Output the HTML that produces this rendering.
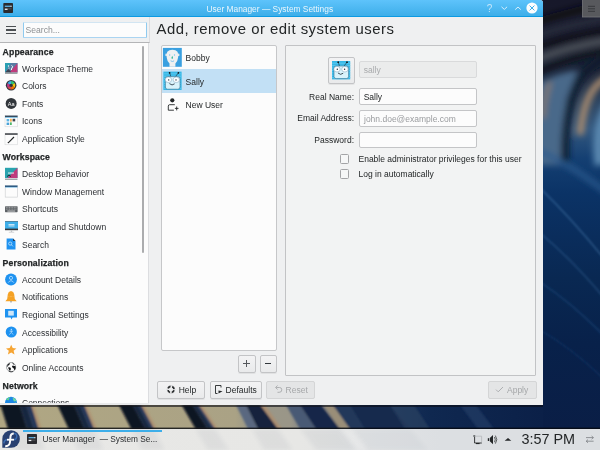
<!DOCTYPE html>
<html><head><meta charset="utf-8">
<style>
*{margin:0;padding:0;box-sizing:border-box}
html,body{width:600px;height:450px;overflow:hidden}
body{-webkit-font-smoothing:antialiased;position:relative;font-family:"Liberation Sans",sans-serif;font-size:8.5px;color:#232627;background:#0b1d3c}
.a{position:absolute}
.t{position:absolute;white-space:nowrap;line-height:12px}
#desk{left:0;top:0;width:600px;height:429px;overflow:hidden;background:#061c44}
#win{will-change:transform;left:0;top:0;width:543px;height:405px;background:#eff0f1;overflow:hidden;border-radius:0 3px 0 0}
#titlebar{left:0;top:0;width:543px;height:17px;background:linear-gradient(180deg,#5ec3fb 0,#3daee9 100%);border-bottom:1px solid #0c9ae2}
#sidehdr{left:0;top:17px;width:150px;height:26px;border-bottom:1px solid #b4b5b7;border-right:1px solid #dcdde0}
#side{left:0;top:43px;width:149px;height:362px;background:#fcfcfc;border-right:1px solid #dcdde0}
.sh{position:absolute;left:2.5px;margin-top:1.5px;-webkit-text-stroke:0.25px #232627;letter-spacing:0.15px;font-weight:bold;white-space:nowrap;line-height:17.6px;height:17.6px;font-size:8.7px;color:#232627}
.si{position:absolute;left:22px;margin-top:0.8px;white-space:nowrap;line-height:17.6px;height:17.6px;color:#2c2f33}
.ic{position:absolute;left:5px;width:12px;height:12px}
.field{position:absolute;background:#fcfcfc;border:1px solid #c4c5c7;border-radius:2px}
.btn{position:absolute;border:1px solid #c3c4c6;border-radius:2px;background:linear-gradient(#f3f3f4,#e9eaeb);box-shadow:0 1px 0 rgba(0,0,0,.06)}
.chk{position:absolute;width:9.6px;height:9.6px;border:1px solid #a3a4a6;border-radius:1.5px;background:#f6f7f7}
</style></head><body>
<div id="desk" class="a"><svg class="a" style="left:0;top:0" width="600" height="429" viewBox="0 0 600 429">
 <defs>
  <linearGradient id="rg" x1="0" y1="0" x2="0" y2="1">
   <stop offset="0" stop-color="#17182a"/>
   <stop offset="0.10" stop-color="#171a2c"/>
   <stop offset="0.16" stop-color="#1a2236"/>
   <stop offset="0.24" stop-color="#2e4662"/>
   <stop offset="0.30" stop-color="#33587f"/>
   <stop offset="0.37" stop-color="#143f72"/>
   <stop offset="0.45" stop-color="#0b3366"/>
   <stop offset="0.55" stop-color="#0a2d5c"/>
   <stop offset="0.65" stop-color="#092852"/>
   <stop offset="0.80" stop-color="#08214a"/>
   <stop offset="1" stop-color="#0a1e46"/>
  </linearGradient>
  <filter id="bl3" filterUnits="userSpaceOnUse" x="500" y="-50" width="150" height="350"><feGaussianBlur stdDeviation="3"/></filter>
  <filter id="bl2" filterUnits="userSpaceOnUse" x="500" y="100" width="150" height="350"><feGaussianBlur stdDeviation="0.8"/></filter>
  <filter id="bl1" filterUnits="userSpaceOnUse" x="-20" y="390" width="660" height="60"><feGaussianBlur stdDeviation="1.3"/></filter>
 </defs>
 <rect x="540" y="0" width="60" height="429" fill="url(#rg)"/>
 <g filter="url(#bl3)">
  <path d="M535 22 Q570 12 610 2" stroke="#0a0b16" stroke-width="7" fill="none"/>
  <path d="M535 36 Q570 24 610 18" stroke="#262a3a" stroke-width="8" fill="none"/>
  <path d="M535 48 Q570 36 610 30" stroke="#080a14" stroke-width="6" fill="none"/>
  <path d="M535 60 Q570 46 610 40" stroke="#4e525a" stroke-width="7" fill="none"/>
  <path d="M535 74 Q565 58 610 50" stroke="#0d121e" stroke-width="6" fill="none"/>
  <path d="M538 84 Q560 72 578 70 L566 100 L562 165 L538 165 Z" fill="#48698a"/>
  <path d="M543 118 Q544 98 550 82" stroke="#8a7a6a" stroke-width="4" fill="none"/>
  <path d="M565 165 Q564 110 578 82 Q590 64 612 56" stroke="#0f1a2e" stroke-width="8" fill="none"/>
  <path d="M580 135 Q583 104 593 90 Q600 80 612 76" stroke="#a88a6e" stroke-width="7" fill="none"/>
  <path d="M600 165 Q595 122 614 98" stroke="#5a88b0" stroke-width="11" fill="none"/>
  <path d="M535 150 Q565 160 610 195" stroke="#2a5a8e" stroke-width="5" fill="none"/>
 </g>
 <g filter="url(#bl2)">
  <path d="M540 188 Q575 222 610 266" stroke="#4a7cae" stroke-width="1.2" fill="none" opacity="0.6"/>
  <path d="M540 233 Q575 262 610 305" stroke="#3f70a4" stroke-width="1.2" fill="none" opacity="0.5"/>
  <path d="M540 282 Q575 305 610 342" stroke="#2a5a90" stroke-width="1.4" fill="none" opacity="0.5"/>
  <path d="M540 330 Q575 350 610 385" stroke="#1e4c84" stroke-width="1.4" fill="none" opacity="0.4"/>
 </g>
 <!-- bottom strip -->
 <defs>
  <linearGradient id="bg2" x1="0" y1="0" x2="543" y2="0" gradientUnits="userSpaceOnUse">
   <stop offset="0" stop-color="#b3a983"/>
   <stop offset="235" stop-color="#aea583" gradientTransform=""/>
  </linearGradient>
  <linearGradient id="bgs" x1="0" y1="0" x2="1" y2="0">
   <stop offset="0" stop-color="#b0a783"/>
   <stop offset="0.433" stop-color="#aaa285"/>
   <stop offset="0.46" stop-color="#9a9888"/>
   <stop offset="0.534" stop-color="#9a9688"/>
   <stop offset="0.589" stop-color="#6a7484"/>
   <stop offset="0.645" stop-color="#4f6078"/>
   <stop offset="0.68" stop-color="#1f3a62"/>
   <stop offset="0.792" stop-color="#0f2850"/>
   <stop offset="1" stop-color="#0b2048"/>
  </linearGradient>
  <linearGradient id="dk" x1="0" y1="0" x2="1" y2="0">
   <stop offset="0" stop-color="#141a2a"/>
   <stop offset="0.15" stop-color="#0b1020"/>
   <stop offset="0.55" stop-color="#0c1324"/>
   <stop offset="0.85" stop-color="#1a2b4a"/>
   <stop offset="1" stop-color="#223556"/>
  </linearGradient>
  <linearGradient id="dk2" x1="0" y1="0" x2="1" y2="0">
   <stop offset="0" stop-color="#6f7a8a"/>
   <stop offset="0.35" stop-color="#24375a"/>
   <stop offset="0.7" stop-color="#0e1c38"/>
   <stop offset="1" stop-color="#1a2c4c"/>
  </linearGradient>
 </defs>
 <rect x="0" y="405" width="543" height="24" fill="url(#bgs)"/>
 <g filter="url(#bl1)">
  <path d="M0.5 405 L19.4 405 L27.0 429 L8.0 429 Z" fill="#0c1222"/>
  <path d="M19.4 405 L26.4 405 L34.0 429 L27.0 429 Z" fill="#17263f"/>
  <path d="M26.4 405 L31.0 405 L38.6 429 L34.0 429 Z" fill="#22355a"/>
  <path d="M31.0 405 L34.2 405 L41.8 429 L38.6 429 Z" fill="#b08666" opacity="0.55"/>
  <path d="M57.5 405 L73.9 405 L84.4 429 L68.7 429 Z" fill="#0c1222"/>
  <path d="M73.9 405 L80.0 405 L90.2 429 L84.4 429 Z" fill="#17263f"/>
  <path d="M80.0 405 L84.0 405 L94.0 429 L90.2 429 Z" fill="#22355a"/>
  <path d="M84.0 405 L87.2 405 L97.2 429 L94.0 429 Z" fill="#b08666" opacity="0.55"/>
  <path d="M119.0 405 L132.6 405 L145.4 429 L131.3 429 Z" fill="#0c1222"/>
  <path d="M132.6 405 L137.7 405 L150.6 429 L145.4 429 Z" fill="#17263f"/>
  <path d="M137.7 405 L141.0 405 L154.0 429 L150.6 429 Z" fill="#22355a"/>
  <path d="M141.0 405 L144.2 405 L157.2 429 L154.0 429 Z" fill="#b08666" opacity="0.55"/>
  <path d="M181.7 405 L192.3 405 L207.6 429 L195.6 429 Z" fill="#0c1222"/>
  <path d="M192.3 405 L196.2 405 L212.1 429 L207.6 429 Z" fill="#17263f"/>
  <path d="M196.2 405 L198.8 405 L215.0 429 L212.1 429 Z" fill="#22355a"/>
  <path d="M198.8 405 L202.0 405 L218.2 429 L215.0 429 Z" fill="#b08666" opacity="0.55"/>
  <path d="M236 405 L246 405 L258 429 L248 429 Z" fill="#5a6880"/>
  <path d="M246 405 L260.4 405 L278 429 L258 429 Z" fill="#15223e"/>
  <path d="M260.4 405 L265 405 L282 429 L278 429 Z" fill="#b08a6a" opacity="0.7"/>
  <path d="M286 405 L300 405 L316 429 L300 429 Z" fill="#4a5a74"/>
  <path d="M300 405 L321 405 L340 429 L316 429 Z" fill="#13264a"/>
  <path d="M323 405 L333 405 L350 429 L340 429 Z" fill="#9a8e78"/>
  <path d="M333 405 L390 405 L410 429 L350 429 Z" fill="#22385a"/>
  <path d="M350 405 L390 405 L405 429 L365 429 Z" fill="#0f2448" opacity="0.7"/>
  <path d="M390 405 L414 405 L430 429 L410 429 Z" fill="#2f4462" opacity="0.6"/>
  <path d="M460 405 L476 405 L494 429 L478 429 Z" fill="#24406a" opacity="0.6"/>
 </g>
 <rect x="0" y="405" width="543" height="2" fill="#0a0c14" opacity="0.6"/>
 <rect x="0" y="427.6" width="600" height="1.4" fill="#05070c" opacity="0.8"/>
 <!-- desktop toolbox -->
 <rect x="582.5" y="-1" width="18" height="18" fill="#58595d" stroke="#76777a" stroke-width="0.8"/>
 <path d="M588 6.3 H595 M588 8.8 H595 M588 11.3 H595" stroke="#333438" stroke-width="0.9"/>
</svg>
</div>

<div id="win" class="a">
  <div id="titlebar" class="a"></div>
  <div class="t" style="left:206.5px;top:2.5px;font-size:8.4px;color:#eaf6fd">User Manager — System Settings</div>

  <div id="sidehdr" class="a"></div>
  <!-- titlebar icon -->
  <svg class="a" style="left:0;top:0" width="543" height="17" viewBox="0 0 543 17">
   <rect x="3.3" y="3" width="9.7" height="10" rx="0.8" fill="#2a2b2f"/>
   <rect x="4.8" y="5.6" width="5.6" height="1.4" fill="#5aa7d6"/>
   <rect x="10.4" y="5.6" width="1.2" height="1.4" fill="#dfe6ea"/>
   <rect x="4.8" y="8.6" width="2.8" height="1.3" fill="#f4f6f8"/>
   <rect x="7.6" y="8.6" width="4" height="0.6" fill="#6d7276"/>
   <!-- help ? -->
   <text x="489.5" y="12" font-family="Liberation Sans" font-size="10" fill="#c4e6fb" text-anchor="middle">?</text>
   <path d="M501.5 6.8 L504.3 9.4 L507.1 6.8" stroke="#d6effd" stroke-width="1" fill="none"/>
   <path d="M515.2 9.6 L518 7 L520.8 9.6" stroke="#d6effd" stroke-width="1" fill="none"/>
   <circle cx="532" cy="8" r="5.6" fill="#fcfdfe"/>
   <path d="M529.6 5.6 L534.4 10.4 M534.4 5.6 L529.6 10.4" stroke="#3daee9" stroke-width="1"/>
  </svg>
  <!-- hamburger -->
  <div class="a" style="left:6px;top:26px;width:10px;height:1.3px;background:#4a4e52"></div>
  <div class="a" style="left:6px;top:29.3px;width:10px;height:1.3px;background:#4a4e52"></div>
  <div class="a" style="left:6px;top:32.6px;width:10px;height:1.3px;background:#4a4e52"></div>
  <!-- search -->
  <div class="a" style="left:23px;top:21.8px;width:123.5px;height:16px;background:#fcfcfc;border:1px solid #8fcaef;border-top-color:#d2e5f2;border-bottom-color:#aad4f1;border-radius:1px"></div>
  <div class="t" style="left:25.5px;top:24px;font-size:8.6px;color:#8e9194">Search...</div>
  <div id="side" class="a"></div>
  <div class="sh" style="top:42.2px">Appearance</div>
  <div class="si" style="top:59.8px">Workspace Theme</div>
  <div class="si" style="top:77.4px">Colors</div>
  <div class="si" style="top:95.0px">Fonts</div>
  <div class="si" style="top:112.6px">Icons</div>
  <div class="si" style="top:130.2px">Application Style</div>
  <div class="sh" style="top:147.8px">Workspace</div>
  <div class="si" style="top:165.4px">Desktop Behavior</div>
  <div class="si" style="top:183.0px">Window Management</div>
  <div class="si" style="top:200.6px">Shortcuts</div>
  <div class="si" style="top:218.2px">Startup and Shutdown</div>
  <div class="si" style="top:235.8px">Search</div>
  <div class="sh" style="top:253.4px">Personalization</div>
  <div class="si" style="top:271.0px">Account Details</div>
  <div class="si" style="top:288.6px">Notifications</div>
  <div class="si" style="top:306.2px">Regional Settings</div>
  <div class="si" style="top:323.8px">Accessibility</div>
  <div class="si" style="top:341.4px">Applications</div>
  <div class="si" style="top:359.0px">Online Accounts</div>
  <div class="sh" style="top:376.6px">Network</div>
  <div class="si" style="top:394.2px">Connections</div>
<svg class="a" style="left:0;top:0" width="150" height="405" viewBox="0 0 150 405">
 <defs>
  <clipPath id="cpside"><rect x="0" y="43" width="149" height="360"/></clipPath>
 </defs>
 <g clip-path="url(#cpside)">
 <!-- Workspace Theme -->
 <g>
  <rect x="5" y="63" width="12.5" height="9.5" fill="#2a9fb3"/>
  <path d="M17.5 63 L17.5 72.5 L9 72.5 Z" fill="#bf3b7c"/>
  <path d="M11 63 L17.5 63 L8 72.5 L5 72.5 Z" fill="#b53a86" opacity="0.35"/>
  <path d="M5 72.5 L8.5 69 L11.5 72.5 Z" fill="#3b4452"/>
  <path d="M11.5 65.5 q2 0.5 0.5 2.5 q-1 1 -0.5 2" stroke="#fff" stroke-width="1" fill="none"/>
  <circle cx="8.5" cy="66" r="0.7" fill="#fff"/>
  <circle cx="9" cy="68" r="0.6" fill="#fff"/>
  <rect x="5" y="72.5" width="12.5" height="1.5" fill="#9fa3a6"/>
 </g>
 <!-- Colors -->
 <g>
  <circle cx="11.15" cy="85.3" r="5.3" fill="#31363b"/>
  <path d="M11.15 85.3 L11.15 81.1 A4.2 4.2 0 0 1 14.8 83.2 Z" fill="#2ecc71"/>
  <path d="M11.15 85.3 L14.8 83.2 A4.2 4.2 0 0 1 14.8 87.4 Z" fill="#f1c40f"/>
  <path d="M11.15 85.3 L14.8 87.4 A4.2 4.2 0 0 1 11.15 89.5 Z" fill="#f67400"/>
  <path d="M11.15 85.3 L11.15 89.5 A4.2 4.2 0 0 1 7.5 87.4 Z" fill="#da4453"/>
  <path d="M11.15 85.3 L7.5 87.4 A4.2 4.2 0 0 1 7.5 83.2 Z" fill="#c0398b"/>
  <path d="M11.15 85.3 L7.5 83.2 A4.2 4.2 0 0 1 11.15 81.1 Z" fill="#3daee9"/>
  <circle cx="11.15" cy="85.3" r="1.6" fill="#31363b"/>
 </g>
 <!-- Fonts -->
 <g>
  <circle cx="11.15" cy="103.4" r="5.5" fill="#31363b"/>
  <text x="11.2" y="105.6" font-family="Liberation Sans" font-size="5.6" fill="#fcfcfc" text-anchor="middle">Aa</text>
 </g>
 <!-- Icons -->
 <g>
  <rect x="5" y="115.6" width="12.6" height="11.2" fill="#fcfcfc" stroke="#cfd1d3" stroke-width="0.5"/>
  <rect x="5" y="115.6" width="12.6" height="1.6" fill="#34495e"/>
  <rect x="5" y="117.2" width="12.6" height="0.5" fill="#3daee9"/>
  <rect x="6.6" y="119" width="2.6" height="2.4" fill="#5bb4e4"/>
  <rect x="10.1" y="118.8" width="1.6" height="2.8" fill="#f7a43a"/>
  <rect x="12.6" y="118.8" width="2.6" height="2.6" fill="#3b4652"/>
  <rect x="6.6" y="122.6" width="2.6" height="2.4" fill="#4aa3d8"/>
  <rect x="10.1" y="122.4" width="1.6" height="2.6" fill="#3cb05a"/>
 </g>
 <!-- Application Style -->
 <g>
  <rect x="5" y="133.2" width="12.6" height="11.6" fill="#fcfcfc" stroke="#cfd1d3" stroke-width="0.5"/>
  <rect x="5" y="133.2" width="12.6" height="1.7" fill="#4f5357"/>
  <path d="M8.2 142.8 L14 137" stroke="#232627" stroke-width="1.1"/>
  <circle cx="8.3" cy="142.6" r="0.7" fill="#232627"/>
 </g>
 <!-- Desktop Behavior -->
 <g>
  <rect x="5" y="167.8" width="12.5" height="10.2" fill="#2aa3ae"/>
  <path d="M17.5 167.8 L17.5 178 L7.5 178 Z" fill="#bf3b7c"/>
  <rect x="8" y="172.6" width="6" height="0.9" fill="#fcfcfc"/>
  <path d="M7 176.5 l2 -1.2 l2 1.2" stroke="#1d1f22" stroke-width="0.9" fill="none"/>
  <rect x="5" y="178.6" width="12.5" height="1.2" fill="#8c9196"/>
 </g>
 <!-- Window Management -->
 <g>
  <rect x="5.2" y="185.6" width="12.2" height="11.5" fill="#fcfcfc" stroke="#c9cbcd" stroke-width="0.6"/>
  <rect x="5" y="185.5" width="12.5" height="1.6" fill="#2c5b83"/>
  <rect x="5" y="187.1" width="12.5" height="0.5" fill="#6fb8e6"/>
 </g>
 <!-- Shortcuts -->
 <g>
  <rect x="5" y="206.2" width="12.6" height="6" rx="0.6" fill="#5d6165"/>
  <path d="M5.8 207.3 h11 M5.8 209.1 h11" stroke="#c8cacc" stroke-width="0.7" stroke-dasharray="1 0.6"/>
  <rect x="7.4" y="210.6" width="7.8" height="0.9" fill="#d6d8da"/>
 </g>
 <!-- Startup and Shutdown -->
 <g>
  <rect x="5" y="221" width="13" height="8.4" fill="#3daee9"/>
  <rect x="5" y="221" width="13" height="0.6" fill="#5b6b78"/>
  <rect x="5" y="228.6" width="13" height="1.6" fill="#31363b"/>
  <rect x="8.5" y="224.2" width="6" height="1.3" fill="#eaf4fb"/>
  <rect x="8.5" y="226" width="6" height="0.6" fill="#a8d6f0"/>
  <rect x="10.8" y="230.2" width="1.4" height="1.8" fill="#bfc2c5"/>
  <rect x="8.8" y="231.8" width="5.4" height="0.9" fill="#d0d2d4"/>
 </g>
 <!-- Search -->
 <g>
  <path d="M6.6 238.6 H13 L15.5 241.1 V249.6 H6.6 Z" fill="#1e92f0"/>
  <path d="M13 238.6 L15.5 241.1 H13 Z" fill="#233a52"/>
  <circle cx="10.2" cy="243.6" r="1.6" fill="none" stroke="#bfe3fb" stroke-width="0.8"/>
  <path d="M11.3 244.7 L13 246.4" stroke="#bfe3fb" stroke-width="0.8"/>
 </g>
 <!-- Account Details -->
 <g>
  <circle cx="11" cy="279.5" r="5.9" fill="#1e92f0"/>
  <circle cx="11" cy="277.9" r="1.6" fill="none" stroke="#d4ecfd" stroke-width="0.7"/>
  <path d="M8.2 282.6 q2.8 -3.8 5.6 0" fill="none" stroke="#d4ecfd" stroke-width="0.7"/>
 </g>
 <!-- Notifications -->
 <g>
  <path d="M5.4 301.2 L7.2 299 L7.8 294.3 Q8.2 291.6 11 291 Q13.8 291.6 14.2 294.3 L14.8 299 L16.7 301.2 Z" fill="#f5a225"/>
  <path d="M10 301.2 h2 l-1 1.8 z" fill="#8d9398"/>
  <path d="M8.6 296.6 h5" stroke="#fcd28d" stroke-width="0.6" stroke-dasharray="0.6 0.8"/>
 </g>
 <!-- Regional Settings -->
 <g>
  <path d="M5 309 H17 V317.6 H12.6 L11.4 319.6 L10.6 317.6 H5 Z" fill="#1e92f0"/>
  <rect x="8.2" y="310.8" width="5.6" height="4.8" fill="#cfe6f8"/>
 </g>
 <!-- Accessibility -->
 <g>
  <circle cx="11.3" cy="332" r="5.6" fill="#1e92f0"/>
  <circle cx="11.3" cy="329.4" r="0.6" fill="#d4ecfd"/>
  <path d="M11.3 330.4 V332.6 L9.2 334.6 M11.3 332.6 L13.4 334.6 M9.6 331.2 H13" stroke="#d4ecfd" stroke-width="0.6" fill="none"/>
 </g>
 <!-- Applications -->
 <g>
  <path d="M11.2 344.8 L12.7 348.1 L16.4 348.4 L13.6 350.8 L14.5 354.5 L11.2 352.6 L7.9 354.5 L8.8 350.8 L6 348.4 L9.7 348.1 Z" fill="#f6a534"/>
 </g>
 <!-- Online Accounts -->
 <g>
  <circle cx="11.1" cy="367.1" r="4.6" fill="none" stroke="#6a6e72" stroke-width="0.6"/>
  <path d="M6.9 366.4 Q7.2 363.8 10 362.9 L9.8 364.3 Q8.3 365 7.9 366.6 Z" fill="#141618"/>
  <path d="M8.3 367.3 Q10.4 367 10.9 368.5 Q11 370.3 9.8 371 L9.1 369.7 Q8.2 369.1 8.3 367.3 Z" fill="#141618"/>
  <path d="M12.1 365.8 Q14.7 365.4 15.7 366.5 Q15.9 368.9 14.5 370.6 L13.9 368.7 Q13 367.8 12.1 367.3 Z" fill="#141618"/>
  <path d="M12.4 363 Q13.8 363.4 14 364.8" stroke="#141618" stroke-width="0.8" fill="none"/>
  <path d="M8.8 371.3 Q11 372.4 13.2 371.5" stroke="#141618" stroke-width="0.7" fill="none"/>
 </g>
 <!-- Connections -->
 <g>
  <circle cx="11" cy="402.8" r="6" fill="#1e88e5"/>
  <path d="M6 399.5 q2 -2.3 4.5 -2.3 q-2 1.6 -1.6 3 q-1.6 0.2 -2.9 -0.7 Z" fill="#5fd38d"/>
  <path d="M12.5 397.6 q3 0.7 4.2 3.8 q-2 -0.8 -2.6 0.4 q-1 -2 -1.6 -4.2 Z" fill="#6fdc9c"/>
  <path d="M15 402.5 q1.2 0 2 1 v2 h-2.6 q0.2 -1.6 0.6 -3 Z" fill="#6fdc9c"/>
 </g>
 </g>
</svg>
  <div class="a" style="left:142px;top:46px;width:2px;height:207px;background:#abacae;border-radius:1px"></div>

  <div class="t" style="left:156.6px;top:18.9px;font-size:14.9px;letter-spacing:0.5px;line-height:20px;color:#232627">Add, remove or edit system users</div>

  <!-- panel -->
  <div class="a" style="left:285px;top:45px;width:251px;height:330.5px;background:#f2f3f3;border:1px solid #c2c3c5;border-radius:1px"></div>
  <!-- avatar button -->
  <div class="btn" style="left:327.5px;top:57px;width:27px;height:26.5px"></div>
  <!-- form -->
  <div class="field" style="left:359px;top:61.2px;width:117.7px;height:17.2px;background:#ebecec;border-color:#d9dadb"></div>
  <div class="t" style="left:363.7px;top:64px;color:#a8aaac">sally</div>
  <div class="field" style="left:359px;top:88.1px;width:117.7px;height:17px"></div>
  <div class="t" style="left:363.7px;top:90.8px;">Sally</div>
  <div class="field" style="left:359px;top:110.1px;width:117.7px;height:16.6px"></div>
  <div class="t" style="left:364px;top:112.5px;color:#9a9c9f">john.doe@example.com</div>
  <div class="field" style="left:359px;top:131.6px;width:117.7px;height:16.7px"></div>
  <div class="t" style="left:254px;width:100px;text-align:right;top:90.6px;">Real Name:</div>
  <div class="t" style="left:254px;width:100px;text-align:right;top:112.4px;">Email Address:</div>
  <div class="t" style="left:254px;width:100px;text-align:right;top:133.7px;">Password:</div>
  <div class="chk" style="left:339.8px;top:154px"></div>
  <div class="t" style="left:358.5px;top:153px;">Enable administrator privileges for this user</div>
  <div class="chk" style="left:339.8px;top:169px"></div>
  <div class="t" style="left:358.5px;top:168.2px;">Log in automatically</div>
  <!-- user list -->
  <div class="a" style="left:160.6px;top:45px;width:116.6px;height:305.5px;background:#fcfcfc;border:1px solid #c6c7c9;border-radius:2px"></div>
  <div class="a" style="left:162px;top:69.3px;width:114px;height:23.5px;background:#c2e0f5"></div>

  <svg class="a" style="left:0;top:0" width="543" height="405" viewBox="0 0 543 405">

   <!-- Bobby -->
   <g transform="translate(162.9 47.9)">
    <rect x="0" y="0" width="18.9" height="18.9" fill="#3aa0e0"/>
    <path d="M6.6 18.9 V15.6 Q4.2 13.4 3.8 9.6 Q3.4 5.6 4.4 3.8 Q6 1.8 9.5 1.8 Q13 1.8 14.6 3.8 Q15.6 5.6 15.2 9.6 Q14.8 13.4 12.5 15.6 V18.9 Z" fill="#eff1f2"/>
    <ellipse cx="3.3" cy="7" rx="0.9" ry="1.4" fill="#e8ebec"/>
    <ellipse cx="15.7" cy="7" rx="0.9" ry="1.4" fill="#e8ebec"/>
    <circle cx="6.8" cy="7.1" r="0.65" fill="#7cc2ee"/>
    <circle cx="11.6" cy="7.1" r="0.65" fill="#7cc2ee"/>
    <path d="M9.3 7.8 Q10.4 9.8 9.9 10.6 Q9.3 11 8.7 10.6 Q8.3 9.8 9.3 7.8 Z" fill="#1fb08f"/>
    <path d="M7.7 12.9 Q9.5 14.2 11.2 13" stroke="#6ab8ea" stroke-width="0.8" fill="none"/>
   </g>
   <!-- Sally -->
   <g transform="translate(163.4 71.6)">
     <rect x="0" y="0" width="18.2" height="18.4" fill="#37b7e6"/>
     <path d="M0 2.2 h18.2 M0 4.6 h18.2 M0 7 h18.2 M0 9.4 h18.2 M0 11.8 h18.2 M0 14.2 h18.2 M0 16.6 h18.2" stroke="#5cc9ef" stroke-width="0.9"/>
     <path d="M6.2 1.2 L7.6 5.4 M15 1.2 L11.8 5.4" stroke="#1d2b36" stroke-width="0.6"/>
     <circle cx="6.2" cy="1.2" r="0.85" fill="#111"/>
     <circle cx="15" cy="1.2" r="0.85" fill="#111"/>
     <rect x="2" y="5" width="14.6" height="12.6" rx="2.2" fill="#d9f3fb" stroke="#2f6f90" stroke-width="0.6"/>
     <ellipse cx="5" cy="8.2" rx="3.2" ry="2.8" fill="#fdfeff" stroke="#5a8aa8" stroke-width="0.4"/>
     <ellipse cx="12.9" cy="8.2" rx="3.2" ry="2.8" fill="#fdfeff" stroke="#5a8aa8" stroke-width="0.4"/>
     <circle cx="5.3" cy="8.3" r="0.7" fill="#1d2b36"/>
     <circle cx="12.6" cy="8.3" r="0.7" fill="#1d2b36"/>
     <path d="M6 12 q2.7 2.6 5.2 0.2" stroke="#1d2b36" stroke-width="0.8" fill="none"/>
</g>
   <!-- New user icon -->
   <circle cx="172.3" cy="100.3" r="2.1" fill="#232627"/>
   <path d="M174.8 104.7 H169.7 Q168.3 104.7 168.3 106.1 V110.2 H173.9" stroke="#232627" stroke-width="0.9" fill="none"/>
   <path d="M174.9 108.4 H178.5 M176.7 106.5 V110.4" stroke="#232627" stroke-width="0.9"/>
   <!-- avatar button in panel -->
   <g transform="translate(332 61)">
     <rect x="0" y="0" width="18.2" height="18.4" fill="#37b7e6"/>
     <path d="M0 2.2 h18.2 M0 4.6 h18.2 M0 7 h18.2 M0 9.4 h18.2 M0 11.8 h18.2 M0 14.2 h18.2 M0 16.6 h18.2" stroke="#5cc9ef" stroke-width="0.9"/>
     <path d="M6.2 1.2 L7.6 5.4 M15 1.2 L11.8 5.4" stroke="#1d2b36" stroke-width="0.6"/>
     <circle cx="6.2" cy="1.2" r="0.85" fill="#111"/>
     <circle cx="15" cy="1.2" r="0.85" fill="#111"/>
     <rect x="2" y="5" width="14.6" height="12.6" rx="2.2" fill="#d9f3fb" stroke="#2f6f90" stroke-width="0.6"/>
     <ellipse cx="5" cy="8.2" rx="3.2" ry="2.8" fill="#fdfeff" stroke="#5a8aa8" stroke-width="0.4"/>
     <ellipse cx="12.9" cy="8.2" rx="3.2" ry="2.8" fill="#fdfeff" stroke="#5a8aa8" stroke-width="0.4"/>
     <circle cx="5.3" cy="8.3" r="0.7" fill="#1d2b36"/>
     <circle cx="12.6" cy="8.3" r="0.7" fill="#1d2b36"/>
     <path d="M6 12 q2.7 2.6 5.2 0.2" stroke="#1d2b36" stroke-width="0.8" fill="none"/>
</g>
  </svg>
  <div class="t" style="left:185.6px;top:52px;">Bobby</div>
  <div class="t" style="left:185.6px;top:75.5px;">Sally</div>
  <div class="t" style="left:185.6px;top:98.5px;">New User</div>
  <!-- +/- -->
  <div class="btn" style="left:238.4px;top:355px;width:17.4px;height:17.6px"></div>
  <div class="a" style="left:243.2px;top:363.3px;width:7px;height:1px;background:#55585c"></div>
  <div class="a" style="left:246.2px;top:360.3px;width:1px;height:7px;background:#55585c"></div>
  <div class="btn" style="left:260.2px;top:355px;width:17px;height:17.6px"></div>
  <div class="a" style="left:265.3px;top:362.9px;width:6px;height:1.4px;background:#31363b"></div>
  <!-- bottom buttons -->
  <div class="btn" style="left:157.3px;top:381.3px;width:47.4px;height:17.6px"></div>
  <svg class="a" style="left:166px;top:384px" width="11" height="11" viewBox="0 0 11 11">
   <circle cx="5" cy="5.5" r="3.1" fill="none" stroke="#232627" stroke-width="1.7" stroke-dasharray="3.1 1.77" stroke-dashoffset="-0.88"/>
   <circle cx="5" cy="5.5" r="3.9" fill="none" stroke="#8a8d90" stroke-width="0.3"/>
  </svg>
  <div class="t" style="left:178.7px;top:384px;">Help</div>
  <div class="btn" style="left:210px;top:381.3px;width:51.6px;height:17.6px"></div>
  <svg class="a" style="left:213px;top:384px" width="11" height="11" viewBox="0 0 11 11">
   <path d="M8 3.5 V1.5 H2.5 V9.5 H4.5" stroke="#232627" stroke-width="0.9" fill="none"/>
   <path d="M5.5 6.5 L9.5 7.2 L5.5 9.5 Z" fill="#232627"/>
  </svg>
  <div class="t" style="left:225.6px;top:384px;">Defaults</div>
  <div class="a" style="left:266.4px;top:381.3px;width:48.2px;height:17.6px;border:1px solid #d4d5d6;border-radius:2px;background:#e4e5e6"></div>
  <svg class="a" style="left:273px;top:384px" width="11" height="11" viewBox="0 0 11 11">
   <path d="M3.2 3.5 H6.5 Q8.8 3.5 8.8 5.8 Q8.8 8.3 6.3 8.3 H4.5" stroke="#a7a9ab" stroke-width="0.9" fill="none"/>
   <path d="M4.6 1.5 L2.5 3.5 L4.6 5.5" stroke="#a7a9ab" stroke-width="0.9" fill="none"/>
  </svg>
  <div class="t" style="left:285.6px;top:384px;color:#a5a7a9">Reset</div>
  <div class="a" style="left:488.1px;top:381.2px;width:48.5px;height:17.7px;border:1px solid #d4d5d6;border-radius:2px;background:#e4e5e6"></div>
  <svg class="a" style="left:494px;top:384px" width="11" height="11" viewBox="0 0 11 11">
   <path d="M2 5.6 L4.2 7.8 L9 3" stroke="#a7a9ab" stroke-width="0.9" fill="none"/>
  </svg>
  <div class="t" style="left:507px;top:384px;color:#a5a7a9">Apply</div>
  <div class="a" style="left:0;top:403px;width:149px;height:2px;background:#e9eaeb"></div>
</div>

<!-- taskbar -->
<div class="a" style="left:0;top:429px;width:600px;height:21px;overflow:hidden;will-change:transform;background:linear-gradient(90deg,#e8e8e6 0,#e7e7e5 300px,#e0e2e4 380px,#dcdfe2 440px,#dcdfe2 600px)">
 <svg class="a" style="left:0;top:0" width="600" height="21" viewBox="0 429 600 21">
  <!-- fedora -->
  <path d="M2.3 447.8 V439 A8.8 8.8 0 1 1 11.1 447.8 Z" fill="#294172"/>
  <path d="M3.9 443.4 Q4.1 439.8 7.2 439.7 M13.8 433.4 Q16.9 433.5 16.8 436.6 Q16.5 439.6 13.8 439.7" stroke="#3c6eb4" stroke-width="1.4" fill="none"/>
  <path d="M5.2 446.2 Q9.6 446.4 10 442 L10.5 436.4 Q10.8 433.4 13.8 433.4" stroke="#fff" stroke-width="2" fill="none"/>
  <path d="M7 439.7 H14" stroke="#fff" stroke-width="1.8"/>
  <filter id="tbb" filterUnits="userSpaceOnUse" x="-10" y="420" width="620" height="40"><feGaussianBlur stdDeviation="2"/></filter>
  <g fill="#203050" opacity="0.05" filter="url(#tbb)">
   <path d="M8 429 L38.6 429 L45 450 L14.6 450 Z"/>
   <path d="M68.7 429 L94 429 L103.6 450 L78.3 450 Z"/>
   <path d="M131.3 429 L154 429 L164.5 450 L141.8 450 Z"/>
   <path d="M195.6 429 L215 429 L229 450 L207.8 450 Z"/>
   <path d="M252 429 L278 429 L292.7 450 L264 450 Z"/>
   <path d="M300 429 L340 429 L356.6 450 L316.6 450 Z"/>
   <path d="M352 429 L410 429 L428 450 L368 450 Z" opacity="0.6"/>
  </g>
  <g fill="#ffffff" opacity="0.12" filter="url(#tbb)">
   <path d="M340 429 L352 429 L368 450 L356.6 450 Z"/>
  </g>
  <!-- active task line -->
  <rect x="23" y="430" width="139" height="2" fill="#3daee9"/>
  <!-- task icon -->
  <rect x="27" y="434" width="10" height="10" rx="0.8" fill="#2a2b2f"/>
  <rect x="28.6" y="437" width="5.6" height="1.3" fill="#5aa7d6"/>
  <rect x="34.2" y="437" width="1.2" height="1.3" fill="#dfe6ea"/>
  <rect x="28.6" y="439.8" width="2.8" height="1.3" fill="#f4f6f8"/>
  <rect x="31.4" y="439.8" width="4" height="0.6" fill="#6d7276"/>
  <!-- network -->
  <path d="M475.5 436.2 H481.6 V442" stroke="#b8bbbe" stroke-width="0.9" fill="none"/>
  <path d="M474.6 437 V443 H481.8" stroke="#232627" stroke-width="0.9" fill="none"/>
  <rect x="476" y="443" width="3.6" height="1.1" fill="#232627"/>
  <path d="M473.4 435 L475.2 437 M475.2 435 L473.4 437" stroke="#232627" stroke-width="0.6"/>
  <!-- speaker -->
  <rect x="487.8" y="438.2" width="1.3" height="2.8" fill="#232627"/>
  <path d="M489.8 438 L493 435 V444.2 L489.8 441.2 Z" fill="#232627"/>
  <path d="M494.5 437 Q496 439.6 494.5 442.2 M495.4 435.6 Q498.2 439.6 495.4 443.6" stroke="#232627" stroke-width="0.7" fill="none"/>
  <!-- up triangle -->
  <path d="M504.7 440.8 L508 437.9 L511.3 440.8 Z" fill="#232627"/>
  <!-- arrows -->
  <path d="M586 437.6 H593.4 M591.6 436 L593.4 437.6 L591.6 439.2" stroke="#7b7e82" stroke-width="0.8" fill="none"/>
  <path d="M593.6 441.2 H586.2 M588 439.6 L586.2 441.2 L588 442.8" stroke="#7b7e82" stroke-width="0.8" fill="none"/>
 </svg>
 <div class="t" style="left:42.5px;top:4.3px;font-size:8.3px;color:#2a2d30">User Manager&nbsp; — System Se...</div>
 <div class="t" style="left:521.5px;top:2px;font-size:14.4px;line-height:17px;color:#232627">3:57 PM</div>
</div>
</body></html>
